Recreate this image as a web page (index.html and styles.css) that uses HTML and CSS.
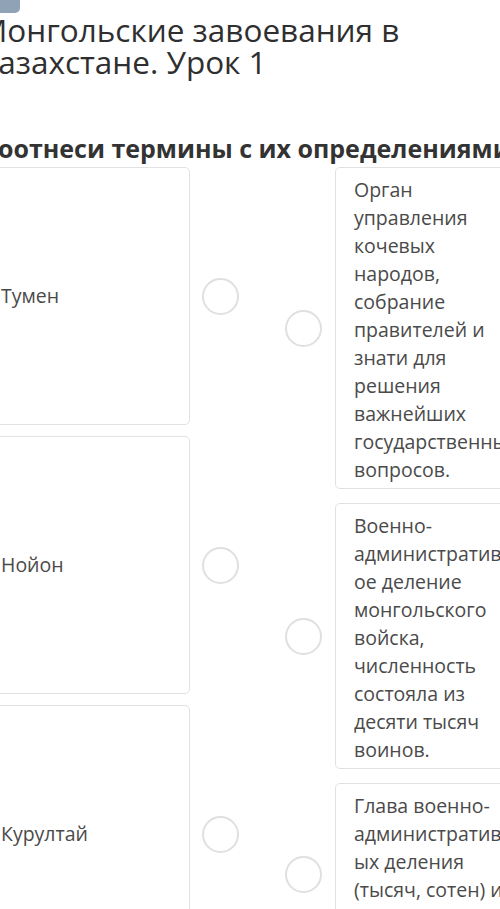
FILE: index.html
```html
<!DOCTYPE html>
<html lang="ru">
<head>
<meta charset="utf-8">
<title>Монгольские завоевания в Казахстане. Урок 1</title>
<link rel="stylesheet" href="styles.css">
</head>
<body>
<div class="page">
  <div class="badge"></div>
  <h1 class="title">Монгольские завоевания в Казахстане. Урок 1</h1>
  <h2 class="task">Соотнеси термины с их определениями</h2>
  <div class="match">
    <div class="col col-left">
      <div class="row-left">
        <div class="card term"><span>Тумен</span></div>
        <div class="dot"></div>
      </div>
      <div class="row-left">
        <div class="card term"><span>Нойон</span></div>
        <div class="dot"></div>
      </div>
      <div class="row-left">
        <div class="card term"><span>Курултай</span></div>
        <div class="dot"></div>
      </div>
    </div>
    <div class="col col-right">
      <div class="row-right">
        <div class="dot"></div>
        <div class="card def">Орган управления кочевых народов, собрание правителей и знати для решения важнейших государственных вопросов.</div>
      </div>
      <div class="row-right">
        <div class="dot"></div>
        <div class="card def">Военно-административн<wbr>ое деление монгольского войска, численность состояла из десяти тысяч воинов.</div>
      </div>
      <div class="row-right">
        <div class="dot"></div>
        <div class="card def">Глава военно-административн<wbr>ых деления (тысяч, сотен) и крупный землевладелец.</div>
      </div>
    </div>
  </div>
</div>
</body>
</html>
```
FILE: styles.css
```css
html, body {
  margin: 0;
  padding: 0;
  background: #ffffff;
  overflow: hidden;
}
body {
  font-family: "Open Sans", "Noto Sans", sans-serif;
  color: #333333;
  width: 500px;
  height: 909px;
}
.page {
  margin-left: -18px;
  width: 600px;
}
.badge {
  width: 38px;
  height: 13px;
  background: #8fa2b6;
  border-radius: 0 0 5px 0;
}
.title {
  margin: 1px 0 0 -3px;
  font-size: 31.5px;
  line-height: 32px;
  font-weight: 400;
  color: #2f2f2f;
  width: 440px;
}
.task {
  margin: 53px 0 2px 0;
  font-size: 25px;
  line-height: 34px;
  font-weight: 700;
  color: #333333;
  white-space: nowrap;
}
.match {
  display: flex;
  gap: 46px;
  align-items: flex-start;
}
.col {
  display: flex;
  flex-direction: column;
}
.col-left {
  gap: 11px;
}
.col-right {
  gap: 14px;
}
.row-left, .row-right {
  display: flex;
  align-items: center;
}
.row-left {
  gap: 12px;
}
.row-right {
  gap: 13px;
}
.card {
  border: 1.5px solid #e2e2e2;
  border-radius: 5px;
  background: #ffffff;
  color: #4a4a4a;
  font-size: 19.5px;
  line-height: 28px;
  box-sizing: border-box;
}
.term {
  width: 208px;
  height: 258px;
  padding: 0 18px;
  display: flex;
  align-items: center;
}
.def {
  width: 210px;
  padding: 8px 18px 4px 18px;
  overflow-wrap: break-word;
}
.dot {
  width: 37px;
  height: 37px;
  flex: none;
  box-sizing: border-box;
  border: 2.5px solid #e0e0e0;
  border-radius: 50%;
}
```
